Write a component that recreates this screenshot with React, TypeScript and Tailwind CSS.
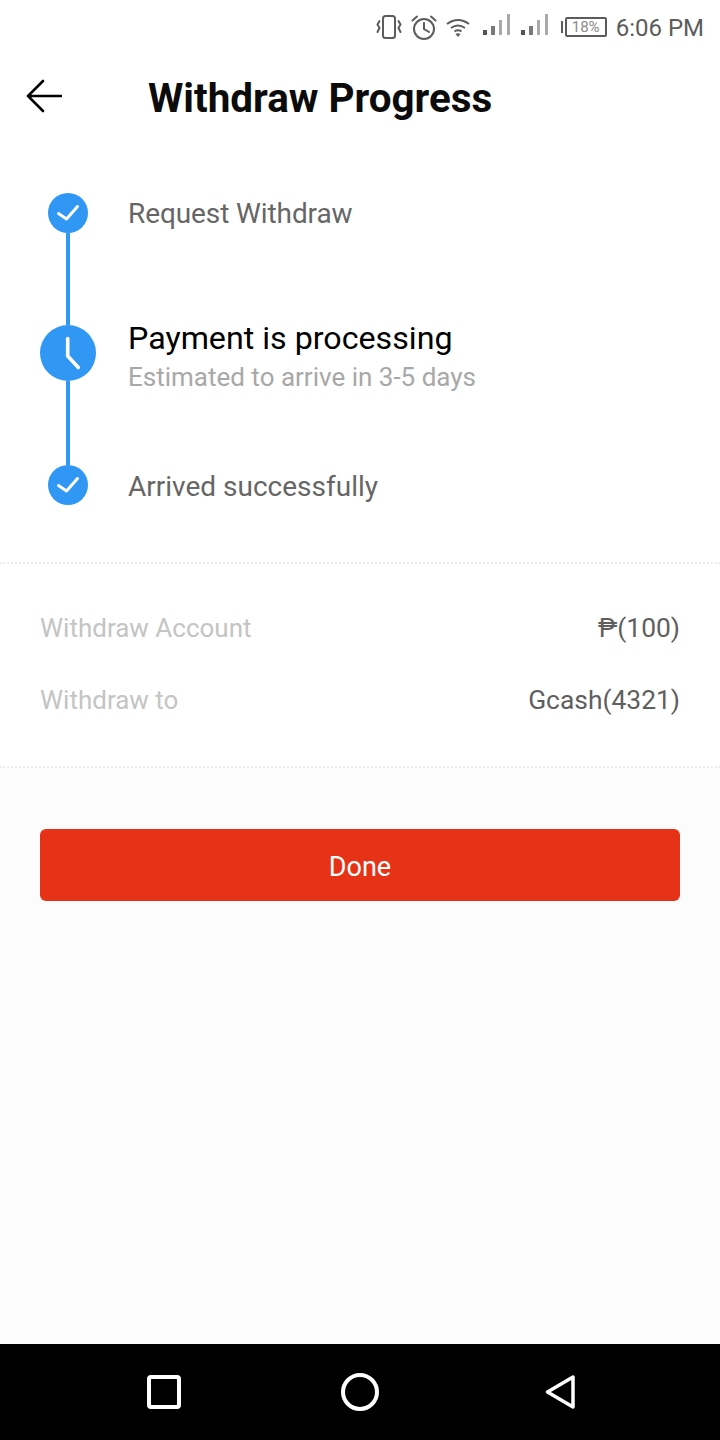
import type { ReactNode } from 'react'

const steps = {
  first: 'Request Withdraw',
  current: 'Payment is processing',
  hint: 'Estimated to arrive in 3-5 days',
  last: 'Arrived successfully',
}

function CheckDot() {
  return (
    <svg width="40" height="40" viewBox="0 0 40 40" className="block shrink-0">
      <circle cx="20" cy="20" r="20" fill="#3097f5" />
      <path d="M10.5 20.5 L18.5 26 L29.5 13.5" fill="none" stroke="#fff" strokeWidth="3" strokeLinecap="round" strokeLinejoin="round" />
    </svg>
  )
}

function ClockDot() {
  return (
    <svg width="56" height="56" viewBox="0 0 56 56" className="block shrink-0">
      <circle cx="28" cy="28" r="28" fill="#3097f5" />
      <path d="M27.7 13.5 V31 L38.3 42.5" fill="none" stroke="#fff" strokeWidth="3.6" strokeLinecap="round" strokeLinejoin="round" />
    </svg>
  )
}

function Connector({ height }: { height: string }) {
  return <div className={`w-1 bg-[#3097f5] ${height}`} />
}

function SignalBars() {
  return (
    <svg width="28" height="22" viewBox="0 0 28 22" className="block">
      <rect x="0" y="16" width="4" height="5" fill="#555" />
      <rect x="8" y="12" width="4" height="9" fill="#777" />
      <rect x="16" y="6" width="3" height="15" fill="#aaa" />
      <rect x="24" y="0" width="3" height="21" fill="#aaa" />
    </svg>
  )
}

function StatusBar() {
  return (
    <div className="flex h-[56px] items-center justify-end pr-[16px] text-[#5c5c5c]">
      <svg width="26" height="24" viewBox="0 0 26 24" fill="none" stroke="#5c5c5c" strokeWidth="2" className="mr-[9px] mb-[2px] block">
        <rect x="7" y="1" width="12" height="22" rx="2.5" />
        <path d="M3.5 6 L1.5 9.5 L3.5 13 L1.5 17" strokeLinecap="round" />
        <path d="M22.5 6 L24.5 9.5 L22.5 13 L24.5 17" strokeLinecap="round" />
      </svg>
      <svg width="26" height="25" viewBox="0 0 26 25" fill="none" stroke="#5c5c5c" strokeWidth="2" className="mr-[9px] mb-[2px] block">
        <circle cx="13" cy="14" r="10" />
        <path d="M13 8 V14 L18 17" strokeLinecap="round" />
        <path d="M1.5 5.5 L6 1.5 M24.5 5.5 L20 1.5" strokeLinecap="round" />
      </svg>
      <svg width="24" height="19" viewBox="0 0 24 19" fill="none" stroke="#5c5c5c" strokeWidth="2" className="mr-[13px] mb-[2px] block">
        <path d="M1 6 Q12 -2 23 6" />
        <path d="M5 10 Q12 5 19 10" />
        <path d="M8.5 13.5 Q12 11 15.5 13.5" />
        <path d="M12 19 L9.5 16 Q12 14.5 14.5 16 Z" fill="#5c5c5c" stroke="none" />
      </svg>
      <div className="mr-[10px] mb-[6px]">
        <SignalBars />
      </div>
      <div className="mr-[12px] mb-[6px]">
        <SignalBars />
      </div>
      <div className="mr-[9px] mb-[2px] flex items-center">
        <div className="mr-[2px] h-[12px] w-[2px] bg-[#5c5c5c]" />
        <div className="flex h-[20px] w-[42px] items-center justify-center rounded-[2px] border-2 border-[#5c5c5c] text-[15px] leading-none text-[#8a8a8a]">
          18%
        </div>
      </div>
      <span className="text-[24px] leading-none">6:06 PM</span>
    </div>
  )
}

function InfoRow({ label, value, children }: { label: string; value: string; children?: ReactNode }) {
  return (
    <div className="flex h-[72px] items-center justify-between px-10 text-[26px]">
      <span className="text-[#c4c4c4]">{label}</span>
      <span className="pt-[2px] text-[26.4px] text-[#5f5f5f]">
        {children}
        {value}
      </span>
    </div>
  )
}

export default function App() {
  return (
    <div className="flex h-[1440px] w-[720px] flex-col bg-white font-['Roboto',sans-serif]">
      <StatusBar />

      <header className="flex h-[84px] items-center">
        <button type="button" className="mb-[4px] ml-[26px] block">
          <svg width="36" height="34" viewBox="0 0 36 34" fill="none" stroke="#000" strokeWidth="2.6" strokeLinecap="round" strokeLinejoin="round" className="block">
            <path d="M2 17 H35 M17 2 L2 17 L17 32" />
          </svg>
        </button>
        <h1 className="ml-[86px] pt-[2px] text-[40.4px] font-bold leading-none text-[#0b0b0b]">Withdraw Progress</h1>
      </header>

      {/* progress timeline */}
      <section className="grid grid-cols-[56px_1fr] gap-x-8 px-10 pt-[53px]">
        <div className="flex justify-center">
          <CheckDot />
        </div>
        <p className="flex h-10 items-center pt-[2px] text-[28px] tracking-[-0.1px] text-[#666]">{steps.first}</p>

        <div className="col-start-1 flex justify-center">
          <Connector height="h-[92px]" />
        </div>

        <div className="col-start-1 flex justify-center">
          <ClockDot />
        </div>
        <div className="flex h-[56px] flex-col justify-center pt-[10px]">
          <p className="text-[32.2px] leading-[38px] text-black">{steps.current}</p>
          <p className="text-[26px] leading-[40px] text-[#a8a8a8]">{steps.hint}</p>
        </div>

        <div className="col-start-1 flex justify-center">
          <Connector height="h-[84px]" />
        </div>

        <div className="col-start-1 flex justify-center">
          <CheckDot />
        </div>
        <p className="flex h-10 items-center pt-1 text-[28px] text-[#666]">{steps.last}</p>
      </section>

      <section className="mt-[57px] border-y-2 border-dotted border-[#ececec] pt-[28px] pb-[30px]">
        <InfoRow label="Withdraw Account" value="₱(100)" />
        <InfoRow label="Withdraw to" value="Gcash(4321)" />
      </section>

      <main className="flex flex-1 flex-col bg-[#fcfcfc] px-10 pt-[61px]">
        <button type="button" className="h-[72px] w-full rounded-md bg-[#e63216] pt-[4px] text-[27px] text-white">
          Done
        </button>
      </main>

      <nav className="flex h-[96px] items-center bg-black pl-[146px]">
        <svg width="36" height="36" viewBox="0 0 36 36" fill="none" stroke="#fff" strokeWidth="4" className="mr-[158px] block">
          <rect x="3" y="3" width="30" height="30" rx="2" />
        </svg>
        <svg width="40" height="40" viewBox="0 0 40 40" fill="none" stroke="#fff" strokeWidth="4" className="mr-[164px] block">
          <circle cx="20" cy="20" r="17" />
        </svg>
        <svg width="32" height="36" viewBox="0 0 32 36" fill="none" stroke="#fff" strokeWidth="3.5" strokeLinejoin="round" className="block">
          <path d="M3.5 18 L29 3 V33 Z" />
        </svg>
      </nav>
    </div>
  )
}
